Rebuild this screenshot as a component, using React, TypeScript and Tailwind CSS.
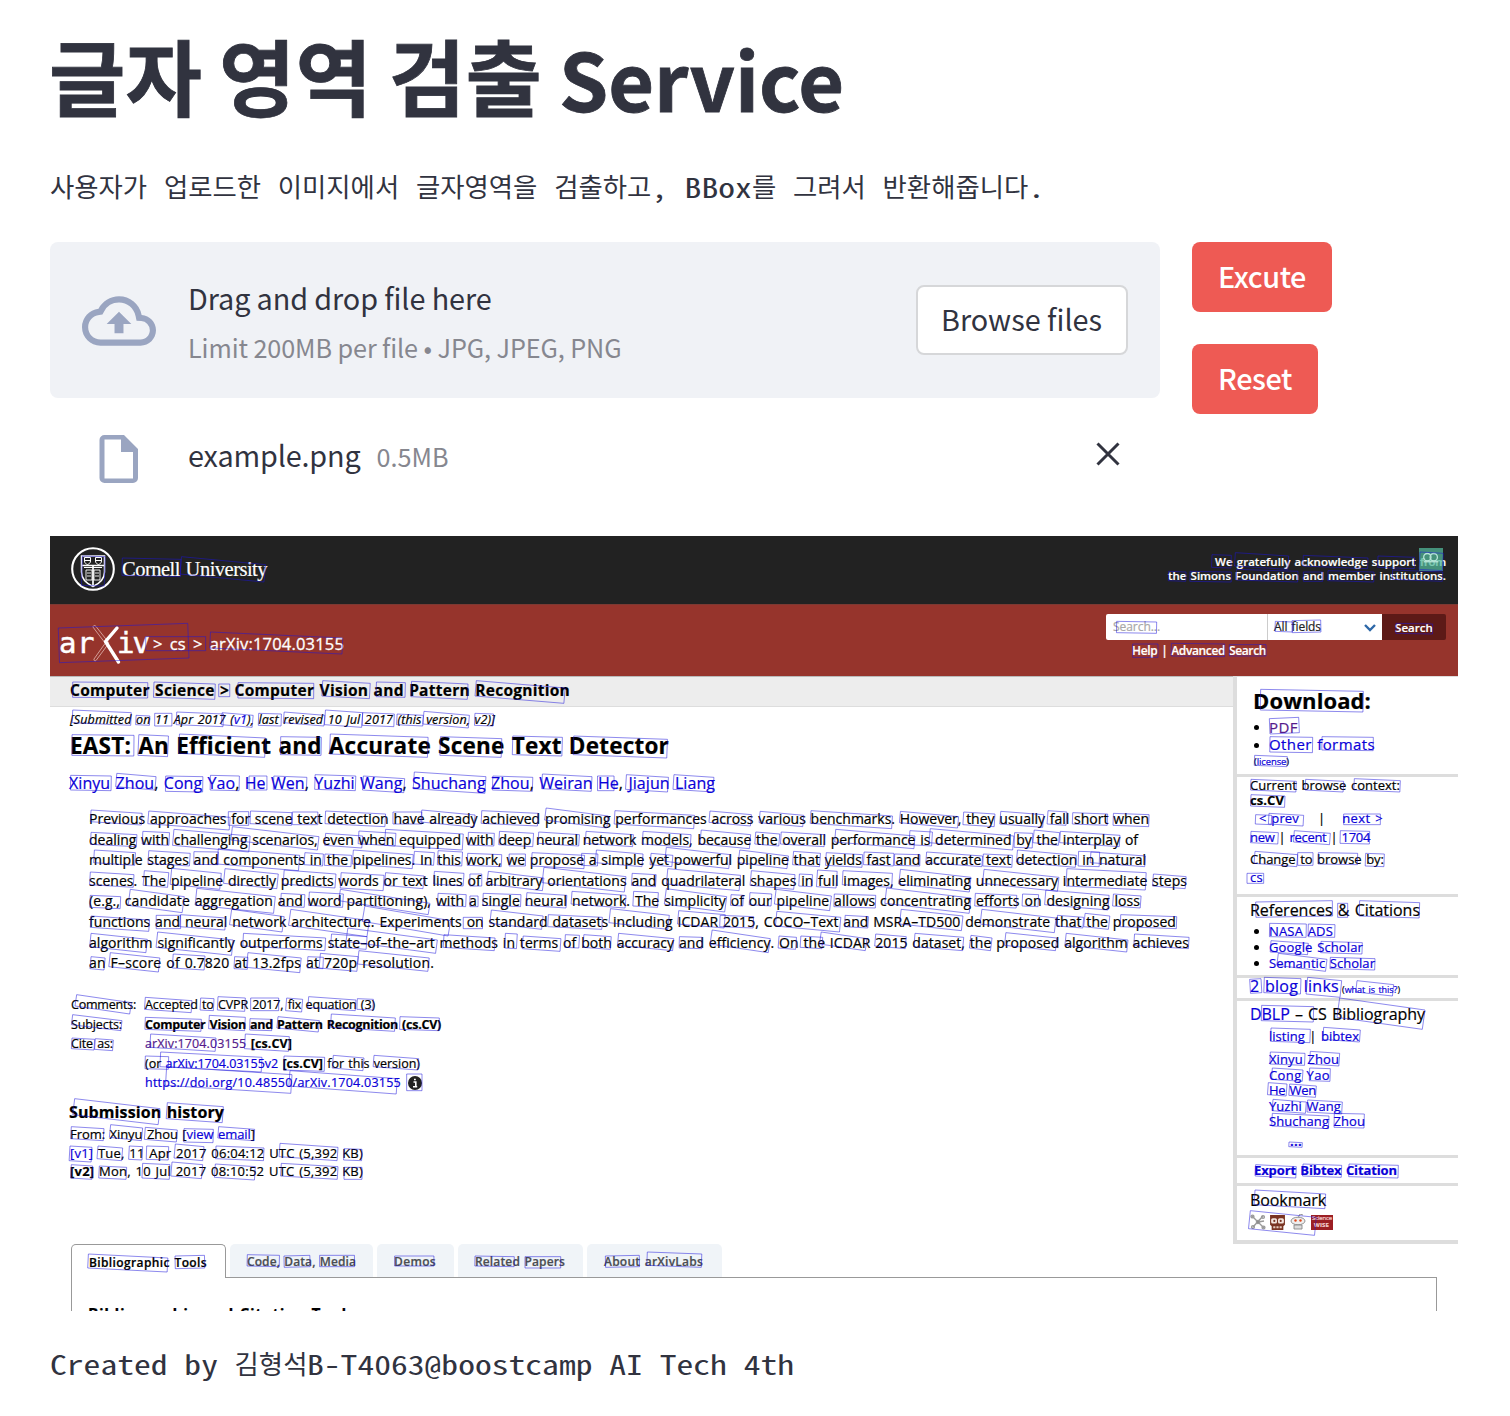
import { useLayoutEffect, useRef, type ReactNode } from "react";

/* A single line of text whose tracking is adjusted so that it fills a given width. */
function Line({ w, className = "", children }: { w: number; className?: string; children: ReactNode }) {
  const ref = useRef<HTMLSpanElement>(null);
  useLayoutEffect(() => {
    const el = ref.current;
    if (!el) return;
    const fit = () => {
      el.style.letterSpacing = "0px";
      const n = (el.textContent || "").length;
      el.style.letterSpacing = `${(w - el.getBoundingClientRect().width) / n}px`;
    };
    fit();
    document.fonts.ready.then(fit);
  }, [w]);
  return (
    <span ref={ref} className={`inline-block shrink-0 self-start justify-self-start whitespace-pre ${className}`}>
      {children}
    </span>
  );
}

const LATIN = "inline-block origin-left scale-x-[1.260] font-['Noto_Sans_Mono_CJK_KR','Liberation_Mono',monospace] text-[26.667px] font-normal";
const HANGUL = "relative -top-[1px] font-['Noto_Sans_CJK_KR',sans-serif] text-[26.400px]";

/* Monospaced text with Hangul runs set in the proportional Korean face. */
function Mono({ text }: { text: string }) {
  return (
    <>
      {text.split(/([가-힣]+)/).map((part, i) =>
        i % 2 ? (
          <span key={i} className={HANGUL}>{part}</span>
        ) : (
          <span key={i} className={LATIN} style={{ width: part.length * 13.333, marginRight: part.length * 3.45 }}>{part}</span>
        ),
      )}
    </>
  );
}

/* Detected word boxes: top-left x, y, top-right x, y, height. */
type Box = [number, number, number, number, number];
type Region = { x: number; y: number; sx: number; boxes: Box[] };

const regions: Region[] = [
  {
    x: 50, y: 530, sx: 2.904,
    boxes: [
      [94, 78, 160, 80, 88], [210, 84, 380, 88, 52], [382, 80, 626, 104, 52], [24, 294, 400, 280, 104],
      [278, 320, 452, 320, 42], [466, 306, 850, 324, 48],
      [66, 456, 284, 458, 46], [302, 456, 480, 462, 46], [490, 462, 522, 462, 38], [546, 458, 766, 460, 46],
      [792, 452, 930, 460, 46], [948, 456, 1032, 458, 44], [1050, 454, 1214, 462, 46], [1238, 452, 1496, 474, 46],
      [66, 540, 236, 548, 38], [250, 556, 290, 558, 28], [304, 550, 354, 550, 38], [368, 546, 504, 552, 38],
      [500, 548, 590, 556, 36], [606, 550, 672, 552, 36], [680, 546, 798, 556, 32], [800, 540, 908, 548, 44],
      [908, 548, 1000, 552, 38], [1008, 552, 1084, 556, 32], [1086, 544, 1218, 556, 38], [1234, 550, 1288, 552, 36],
      [64, 614, 244, 616, 62], [258, 614, 344, 618, 62], [376, 612, 626, 624, 58], [670, 620, 788, 622, 54],
      [814, 612, 1098, 622, 60], [1134, 620, 1312, 626, 56], [1344, 618, 1488, 622, 56], [1521, 618, 1793, 628, 56],
      [60, 736, 178, 738, 44], [194, 730, 308, 740, 40], [336, 738, 444, 740, 46], [466, 736, 550, 738, 44],
      [578, 738, 630, 738, 42], [650, 738, 746, 742, 40], [770, 734, 888, 738, 44], [910, 738, 1030, 746, 42],
      [1058, 726, 1266, 740, 50], [1286, 738, 1402, 742, 42], [1430, 732, 1574, 740, 44], [1590, 738, 1638, 738, 44],
      [1674, 734, 1796, 742, 44], [1812, 734, 1928, 742, 44],
    ],
  },
  {
    x: 60, y: 800, sx: 2.703,
    boxes: [
      [84, 30, 222, 40, 35], [240, 33, 460, 52, 38], [455, 35, 510, 35, 41], [515, 33, 627, 38, 38],
      [628, 36, 697, 36, 38], [718, 33, 880, 42, 38], [900, 36, 978, 36, 36], [978, 30, 1122, 45, 36],
      [1140, 32, 1292, 40, 38], [1314, 24, 1482, 48, 36], [1500, 32, 1715, 46, 40],
      [84, 97, 208, 104, 36], [224, 94, 296, 98, 38], [308, 88, 514, 108, 48], [466, 80, 700, 110, 40],
      [718, 100, 818, 108, 36], [808, 93, 908, 100, 38], [880, 88, 1090, 102, 48], [1104, 97, 1174, 100, 38],
      [1188, 94, 1280, 100, 40], [1294, 96, 1404, 104, 34], [1422, 94, 1550, 104, 36],
      [93, 150, 204, 158, 38], [240, 152, 352, 160, 38], [362, 155, 428, 156, 38], [428, 146, 648, 166, 46],
      [662, 158, 712, 162, 36], [716, 162, 788, 166, 34], [793, 150, 955, 164, 42], [958, 154, 1012, 158, 38],
      [1022, 152, 1088, 156, 42], [1102, 160, 1194, 164, 36], [1214, 162, 1258, 162, 36], [1276, 158, 1418, 166, 40],
      [1410, 160, 1454, 162, 36], [1450, 150, 1576, 162, 38],
      [82, 216, 200, 224, 38], [228, 212, 294, 218, 44], [302, 205, 436, 220, 48], [446, 206, 590, 222, 44],
      [606, 210, 746, 222, 42], [760, 218, 876, 226, 46], [880, 218, 984, 228, 38], [1012, 214, 1092, 220, 38],
      [1108, 222, 1140, 222, 36], [1158, 214, 1308, 234, 38], [1308, 202, 1530, 230, 46],
      [82, 286, 164, 290, 36], [190, 268, 336, 290, 48], [370, 265, 582, 290, 50], [598, 280, 662, 284, 38],
      [674, 276, 766, 282, 40], [758, 268, 1000, 310, 34], [1022, 280, 1098, 284, 36], [1108, 288, 1130, 288, 32],
      [1144, 280, 1246, 284, 36], [1262, 278, 1370, 286, 38], [1384, 274, 1530, 286, 38],
      [84, 348, 242, 360, 34], [260, 346, 326, 346, 40], [326, 344, 448, 354, 36], [464, 328, 606, 350, 46],
      [624, 328, 836, 362, 48], [824, 318, 1056, 362, 46], [1090, 352, 1142, 352, 34], [1166, 330, 1306, 348, 40],
      [1320, 344, 1466, 352, 36], [1488, 326, 1647, 346, 42],
      [84, 400, 236, 418, 40], [264, 396, 468, 420, 46], [496, 400, 718, 414, 38], [734, 402, 830, 410, 38],
      [778, 384, 1020, 420, 40], [1038, 404, 1176, 414, 38], [1204, 400, 1236, 402, 44], [1252, 408, 1354, 416, 38],
      [1366, 404, 1404, 406, 38], [1416, 404, 1490, 410, 38], [1510, 400, 1659, 416, 36],
      [84, 470, 122, 474, 36], [136, 458, 270, 474, 42], [306, 462, 392, 468, 42], [472, 470, 508, 472, 36],
      [508, 458, 652, 474, 44], [670, 470, 712, 472, 34], [704, 460, 806, 470, 44], [808, 452, 998, 474, 40],
    ],
  },
  {
    x: 630, y: 800, sx: 2.751,
    boxes: [
      [220, 33, 334, 44, 34], [358, 34, 478, 46, 34], [498, 32, 722, 48, 38], [744, 34, 904, 50, 34],
      [918, 36, 1004, 42, 38], [1020, 34, 1138, 44, 38], [1150, 32, 1202, 36, 40], [1218, 38, 1314, 42, 34],
      [1330, 40, 1428, 44, 36],
      [36, 94, 168, 104, 38], [196, 90, 332, 104, 42], [346, 96, 412, 102, 36], [416, 96, 536, 104, 36],
      [566, 88, 784, 108, 38], [770, 92, 832, 96, 42], [826, 86, 1056, 108, 42], [1058, 98, 1108, 100, 44],
      [1112, 90, 1182, 98, 38], [1184, 94, 1348, 106, 34],
      [58, 160, 118, 166, 34], [100, 142, 276, 164, 42], [302, 150, 436, 168, 38], [450, 154, 524, 160, 40],
      [540, 158, 640, 164, 38], [644, 156, 726, 160, 38], [728, 162, 798, 164, 34], [816, 156, 970, 168, 32],
      [972, 162, 1052, 166, 36], [1066, 150, 1228, 166, 36], [1234, 154, 1292, 156, 44], [1268, 156, 1418, 168, 32],
      [6, 220, 72, 224, 36], [104, 206, 304, 226, 46], [334, 212, 454, 224, 44], [466, 222, 502, 224, 36],
      [516, 210, 570, 214, 50], [586, 212, 722, 220, 42], [744, 208, 938, 232, 44], [974, 208, 1180, 232, 42],
      [1202, 206, 1420, 218, 52], [1440, 222, 1530, 230, 36],
      [10, 274, 78, 278, 44], [100, 266, 266, 290, 46], [278, 284, 312, 286, 32], [330, 278, 390, 282, 36],
      [402, 268, 554, 288, 44], [562, 282, 676, 286, 38], [706, 264, 938, 294, 46], [950, 280, 1064, 286, 38],
      [1080, 282, 1124, 284, 36], [1144, 270, 1318, 286, 44], [1330, 282, 1406, 288, 36],
      [134, 332, 262, 344, 40], [248, 346, 340, 350, 34], [404, 334, 580, 352, 44], [592, 346, 656, 350, 34],
      [746, 328, 916, 348, 44], [968, 328, 1172, 354, 44], [1176, 346, 1248, 352, 32], [1252, 340, 1320, 348, 40],
      [1350, 344, 1504, 350, 36],
      [136, 410, 198, 412, 34], [226, 390, 386, 416, 42], [410, 408, 458, 412, 36], [470, 408, 530, 412, 34],
      [526, 396, 652, 416, 36], [676, 402, 760, 410, 36], [784, 400, 918, 412, 40], [938, 406, 996, 414, 38],
      [1034, 398, 1174, 414, 38], [1200, 400, 1370, 420, 36], [1388, 402, 1538, 412, 34],
    ],
  },
  {
    x: 1090, y: 530, sx: 3,
    boxes: [
      [366, 74, 424, 76, 38], [436, 68, 596, 78, 40], [640, 76, 834, 84, 32], [864, 78, 974, 82, 34],
      [990, 66, 1060, 70, 52], [236, 124, 288, 126, 28], [300, 124, 424, 126, 30], [440, 118, 624, 124, 32],
      [640, 126, 698, 126, 28], [714, 122, 852, 126, 30], [908, 120, 1058, 126, 28],
      [80, 274, 200, 276, 34], [556, 274, 608, 276, 30], [606, 272, 692, 270, 36], [918, 280, 1028, 282, 30],
      [128, 342, 204, 342, 40], [244, 340, 404, 342, 38], [418, 344, 528, 344, 34],
      [512, 478, 820, 484, 62], [538, 566, 626, 562, 46], [540, 620, 668, 622, 46], [696, 620, 850, 622, 40],
      [494, 676, 592, 680, 30],
    ],
  },
  {
    x: 1225, y: 770, sx: 3,
    boxes: [
      [78, 28, 214, 34, 32], [242, 28, 356, 34, 32], [388, 26, 526, 32, 34], [78, 74, 180, 78, 34],
      [92, 134, 140, 136, 28], [132, 130, 236, 136, 32], [356, 132, 466, 132, 32], [78, 184, 160, 188, 34],
      [208, 182, 316, 190, 34], [346, 182, 434, 184, 38], [90, 244, 218, 254, 36], [218, 248, 264, 248, 38],
      [280, 248, 398, 250, 34], [422, 250, 478, 252, 38], [66, 310, 116, 310, 30], [92, 396, 322, 392, 46],
      [338, 400, 368, 400, 42], [404, 392, 584, 398, 46], [134, 460, 244, 462, 40], [250, 462, 330, 464, 38],
      [138, 512, 250, 520, 34], [288, 514, 412, 518, 34], [160, 550, 306, 568, 36], [316, 562, 450, 566, 34],
      [74, 628, 108, 626, 42], [118, 622, 228, 626, 46], [248, 622, 350, 632, 50], [396, 632, 506, 644, 34],
    ],
  },
  {
    x: 1225, y: 1000, sx: 3,
    boxes: [
      [110, 16, 266, 20, 46], [344, -6, 600, 30, 58], [138, 84, 256, 88, 40], [296, 82, 406, 90, 36],
      [136, 156, 240, 160, 36], [256, 154, 344, 160, 38], [142, 204, 234, 210, 34], [254, 204, 316, 206, 38],
      [130, 248, 186, 252, 36], [194, 252, 274, 258, 34], [144, 298, 244, 306, 34], [248, 300, 352, 306, 36],
      [142, 340, 312, 348, 38], [328, 340, 418, 342, 42], [192, 426, 232, 428, 14], [92, 494, 214, 500, 34],
      [234, 492, 350, 496, 36], [372, 492, 520, 496, 38], [90, 570, 302, 582, 44], [76, 632, 274, 652, 54],
    ],
  },
  {
    x: 60, y: 980, sx: 3,
    boxes: [
      [50, 44, 214, 68, 34], [256, 52, 396, 62, 36], [422, 54, 462, 56, 36], [474, 50, 556, 54, 40],
      [572, 54, 656, 54, 38], [680, 54, 728, 58, 38], [746, 50, 888, 60, 32], [892, 56, 940, 58, 32],
      [38, 104, 186, 122, 30], [256, 112, 424, 118, 36], [448, 106, 556, 112, 40], [570, 116, 636, 118, 34],
      [654, 110, 778, 122, 34], [814, 102, 1006, 114, 40], [1020, 110, 1138, 114, 38],
      [36, 174, 104, 178, 32], [106, 176, 160, 180, 32], [272, 162, 468, 174, 40], [556, 162, 688, 170, 44],
      [256, 228, 326, 230, 38], [302, 216, 606, 232, 44], [672, 228, 794, 232, 42], [820, 226, 912, 234, 38],
      [942, 226, 1076, 236, 34], [320, 260, 696, 284, 56], [690, 272, 1012, 296, 46], [1040, 282, 1086, 282, 50],
      [44, 356, 300, 386, 48], [322, 368, 490, 380, 48],
      [34, 440, 132, 446, 36], [152, 434, 248, 444, 38], [256, 442, 352, 450, 36], [372, 446, 460, 448, 40],
      [476, 440, 584, 448, 34],
      [30, 498, 96, 502, 44], [114, 498, 188, 504, 38], [208, 498, 248, 500, 40], [260, 498, 326, 500, 40],
      [346, 492, 432, 500, 42], [468, 498, 612, 504, 38], [660, 490, 834, 502, 40], [852, 506, 906, 508, 34],
      [34, 554, 98, 558, 40], [118, 558, 200, 562, 36], [248, 550, 330, 554, 44], [336, 546, 428, 554, 42],
      [466, 552, 586, 560, 40], [664, 550, 834, 560, 38], [852, 562, 906, 562, 36],
    ],
  },
  {
    x: 50, y: 1230, sx: 2.24,
    boxes: [
      [86, 72, 264, 84, 42], [280, 78, 346, 76, 38], [442, 74, 514, 76, 34], [524, 78, 582, 76, 34],
      [604, 76, 682, 76, 34], [772, 78, 860, 78, 30], [952, 78, 1040, 80, 30], [1064, 80, 1144, 80, 34],
      [1244, 78, 1320, 76, 34], [1338, 66, 1460, 72, 40],
    ],
  },
];

function WordBoxes() {
  return (
    <svg viewBox="50 536 1408 775" className="pointer-events-none absolute inset-0 z-20 h-[775px] w-[1408px]" fill="none" stroke="#1c14dc" strokeOpacity="0.5" strokeWidth="1">
      {regions.map((r, i) =>
        r.boxes.map(([x0, y0, x1, y1, h], j) => {
          const ax = r.x + x0 / r.sx, ay = r.y + y0 / 3;
          const bx = r.x + x1 / r.sx, by = r.y + y1 / 3;
          const hh = h / 3;
          const dx = (-(by - ay) / (bx - ax)) * hh;
          return <polygon key={`${i}-${j}`} points={`${ax},${ay} ${bx},${by} ${bx + dx},${by + hh} ${ax + dx},${ay + hh}`} />;
        }),
      )}
    </svg>
  );
}

function CornellSeal() {
  return (
    <svg viewBox="0 0 44 44" className="relative -top-px h-[44px] w-[44px]" fill="none" stroke="#fff">
      <circle cx="22" cy="22" r="20.8" strokeWidth="2.100" />
      <path d="M10.500 9h23v16c0 7-5 11.500-11.500 14.500C15.500 36.500 10.500 32 10.500 25z" strokeWidth="1.500" />
      <path d="M10.500 18.500h23M22 18.500v21" strokeWidth="1.700" />
      <path d="M13.500 10.500h6v3.500c0 2-1.500 3-3 3.500-1.500-.5-3-1.500-3-3.500zM24.500 10.500h6v3.500c0 2-1.500 3-3 3.500-1.500-.5-3-1.500-3-3.500zM14 13.500h5M25 13.500h5M13 20.500h18" strokeWidth="1" />
      <path d="M15 23h6v10h-6zM23 23h6v10h-6zM16 26h4M16 29h4M24 26h4M24 29h4" strokeWidth="0.9" />
    </svg>
  );
}

function ArxivLogo() {
  return (
    <div className="flex h-[44px] items-center font-['DejaVu_Sans_Mono',monospace] text-[29px] leading-[42px] text-white [-webkit-text-stroke:0.5px_white]">
      <Line w={36}>ar</Line>
      <svg viewBox="0 0 30 42" className="-mx-[4px] h-[42px] w-[30px] shrink-0" fill="none" strokeLinecap="round">
        <path d="M2 3.500c.8-1.500 2-1.300 3 0L18 20 5 37.500c-1 1-2.500 0-2-1.500L14 20.500z" stroke="#d9a9a4" strokeWidth="0.9" />
        <path d="M26 5 14.500 18.500 27.500 39" stroke="#fff" strokeWidth="3.400" strokeLinejoin="round" />
      </svg>
      <Line w={31}>iv</Line>
    </div>
  );
}

const abstract: [number, string][] = [
  [1060, "Previous approaches for scene text detection have already achieved promising performances across various benchmarks. However, they usually fall short when"],
  [1049, "dealing with challenging scenarios, even when equipped with deep neural network models, because the overall performance is determined by the interplay of"],
  [1057, "multiple stages and components in the pipelines. In this work, we propose a simple yet powerful pipeline that yields fast and accurate text detection in natural"],
  [1098, "scenes. The pipeline directly predicts words or text lines of arbitrary orientations and quadrilateral shapes in full images, eliminating unnecessary intermediate steps"],
  [1051, "(e.g., candidate aggregation and word partitioning), with a single neural network. The simplicity of our pipeline allows concentrating efforts on designing loss"],
  [1087, "functions and neural network architecture. Experiments on standard datasets including ICDAR 2015, COCO–Text and MSRA–TD500 demonstrate that the proposed"],
  [1100, "algorithm significantly outperforms state–of–the–art methods in terms of both accuracy and efficiency. On the ICDAR 2015 dataset, the proposed algorithm achieves"],
  [345, "an F–score of 0.7820 at 13.2fps at 720p resolution."],
];

const authors: [number, string][] = [
  [70, "Xinyu Zhou"], [61, "Cong Yao"], [47, "He Wen"], [72, "Yuzhi Wang"], [96, "Shuchang Zhou"],
];

const Blue = ({ children }: { children: ReactNode }) => <span className="text-[#0a00d8]">{children}</span>;

function Bullet({ w, children, className }: { w: number; children: ReactNode; className: string }) {
  return (
    <div className={`flex ${className}`}>
      <span className="mr-[10px] ml-[4px] h-[5px] w-[5px] self-center rounded-full bg-black" />
      <Line w={w}>{children}</Line>
    </div>
  );
}

function Sidebar() {
  return (
    <aside className="h-[568px] w-[225px] shrink-0 border-t border-b-4 border-l-[4px] border-[#ddd] text-[13px] text-black">
      <section className="h-[100px] border-b-[3px] border-[#ddd] pt-[6px] pl-[13px]">
        <div className="flex h-[36px] text-[22px] leading-[34px] font-bold"><Line w={118} className="ml-[3px]">Download:</Line></div>
        <Bullet w={29} className="h-[17px] text-[15px] leading-[16px] text-[#551a8b]">PDF</Bullet>
        <Bullet w={106} className="h-[18px] text-[15px] leading-[17px] text-[#0a00d8]">Other formats</Bullet>
        <div className="flex h-[16px] text-[9.500px] leading-[15px]"><Line w={35} className="ml-[4px]">(<Blue>license</Blue>)</Line></div>
      </section>
      <section className="h-[120px] border-b-[3px] border-[#ddd] pl-[13px]">
        <div className="flex h-[16px] leading-[16px]"><Line w={150}>Current browse context:</Line></div>
        <div className="flex h-[16px] leading-[15px] font-bold"><Line w={34}>cs.CV</Line></div>
        <div className="flex h-[20px] leading-[19px]">
          <Line w={40} className="ml-[9px] text-[#0a00d8]">&lt; prev</Line>
          <span className="ml-[19px]">|</span>
          <Line w={41} className="ml-[17px] text-[#0a00d8]">next &gt;</Line>
        </div>
        <div className="flex h-[18px] leading-[17px]"><Line w={120}><Blue>new</Blue> | <Blue>recent</Blue> | <Blue>1704</Blue></Line></div>
        <div className="flex h-[26px] leading-[25px]"><Line w={134}>Change to browse by:</Line></div>
        <div className="flex h-[10px] leading-[9px]"><Line w={13}><Blue>cs</Blue></Line></div>
      </section>
      <section className="h-[81px] border-b-[3px] border-[#ddd] pl-[13px]">
        <div className="flex h-[26px] text-[16px] leading-[26px]"><Line w={170}>References &amp; Citations</Line></div>
        <Bullet w={64} className="h-[16px] leading-[16px] text-[#0a00d8]">NASA ADS</Bullet>
        <Bullet w={94} className="h-[16px] leading-[16px] text-[#0a00d8]">Google Scholar</Bullet>
        <Bullet w={106} className="h-[16px] leading-[16px] text-[#0a00d8]">Semantic Scholar</Bullet>
      </section>
      <section className="flex h-[23px] border-b-[3px] border-[#ddd] pl-[13px] leading-[17px]">
        <Line w={89} className="text-[16px] text-[#0a00d8]">2 blog links</Line>
        <Line w={58} className="ml-[3px] pt-[3px] text-[9px]">(<Blue>what is this?</Blue>)</Line>
      </section>
      <section className="h-[157px] border-b-[3px] border-[#ddd] pl-[13px]">
        <div className="flex h-[29px] text-[16px] leading-[27px]"><Line w={175}><Blue>DBLP</Blue> – CS Bibliography</Line></div>
        <div className="ml-[19px] flex h-[22px] leading-[12px]"><Line w={90}><Blue>listing</Blue> | <Blue>bibtex</Blue></Line></div>
        {authors.map(([w, name]) => (
          <div key={name} className="ml-[19px] flex h-[15.600px] leading-[14px] text-[#0a00d8]"><Line w={w}>{name}</Line></div>
        ))}
        <div className="ml-[40px] flex h-[20px] leading-[22px]"><Line w={12} className="font-bold text-[#0a00d8]">...</Line></div>
      </section>
      <section className="flex h-[28px] border-b-[3px] border-[#ddd] pl-[17px] leading-[24px] font-bold text-[#0a00d8]">
        <Line w={143}>Export Bibtex Citation</Line>
      </section>
      <section className="pl-[13px]">
        <div className="flex h-[28px] text-[16px] leading-[28px]"><Line w={76}>Bookmark</Line></div>
        <div className="flex h-[16px] items-center">
          <svg viewBox="0 0 16 16" className="mr-[3px] h-[16px] w-[16px]" fill="none" stroke="#999" strokeWidth="1.400">
            <path d="M2 2l12 12M13 2 3 13M8 8l6-1" />
            <circle cx="2.500" cy="2.500" r="1.400" /><circle cx="13" cy="3" r="1.400" /><circle cx="8" cy="8" r="1.600" fill="#888" /><circle cx="13.500" cy="13.500" r="1.400" /><circle cx="3" cy="13" r="1.400" />
          </svg>
          <svg viewBox="0 0 16 16" className="mr-[4px] h-[17px] w-[17px]">
            <path d="M1 1h14v9l-1.500 1.500V15h-11v-3.500L1 10z" fill="#7a3423" />
            <rect x="2" y="4" width="5.500" height="5" rx="1.500" fill="#f3e5de" /><rect x="8.500" y="4" width="5.500" height="5" rx="1.500" fill="#f3e5de" />
            <circle cx="5" cy="6.500" r="1" fill="#7a3423" /><circle cx="11" cy="6.500" r="1" fill="#7a3423" />
            <path d="M4 12.500h2M7 12.500h2M10 12.500h2" stroke="#e5c9bd" strokeWidth="2" />
          </svg>
          <svg viewBox="0 0 16 16" className="mr-[5px] h-[16px] w-[16px]" stroke="#888" strokeWidth="0.900">
            <path d="M8 4 10 0l3 1" fill="none" />
            <ellipse cx="8" cy="7" rx="7" ry="3.800" fill="#eee" />
            <path d="M4 11h8v4H4z" fill="#ddd" />
            <circle cx="5.500" cy="6.500" r="1.200" fill="#e2491c" stroke="none" /><circle cx="10.500" cy="6.500" r="1.200" fill="#e2491c" stroke="none" />
          </svg>
          <div className="flex h-[15px] w-[22px] flex-col bg-[#9c1f24] pl-px text-[6px] leading-[7px] text-[#f1cfcf]">
            <Line w={20}>Science</Line>
            <Line w={15} className="ml-[2px] font-bold">WISE</Line>
          </div>
        </div>
      </section>
    </aside>
  );
}

const tabs: [string, number, string][] = [
  ["Code, Data, Media", 109, "w-[143px] pl-[17px] mr-[4px]"],
  ["Demos", 42, "w-[77px] pl-[17px] mr-[4px]"],
  ["Related Papers", 90, "w-[125px] pl-[17px] mr-[4px]"],
  ["About arXivLabs", 99, "w-[135px] pl-[17px]"],
];

function ArxivPage() {
  return (
    <div className="relative mt-[34px] h-[775px] w-[1408px] overflow-hidden bg-white font-['Open_Sans','Noto_Sans',sans-serif] text-black [word-spacing:0.07em] [-webkit-text-stroke-width:0.2px]">
      <header className="flex h-[68px] items-center bg-[#222] pr-[12px] pl-[21px] text-white">
        <CornellSeal />
        <div className="mt-[-2px] ml-[7px] font-['Liberation_Serif',serif] text-[20.500px] leading-[28px]"><Line w={145}>Cornell University</Line></div>
        <div className="relative -top-px ml-auto flex flex-col text-[11.500px] leading-[14.500px] font-semibold">
          <div className="flex self-end">
            <Line w={205}>We gratefully acknowledge support </Line>
            <span className="relative flex">
              <Line w={26}>from</Line>
              <span className="absolute -top-[7px] -left-px flex h-[23px] w-[24px] items-center justify-center bg-[#52b79a]/75">
                <svg viewBox="0 0 24 24" className="h-[22px] w-[22px]" fill="none" stroke="#b9e6d9" strokeWidth="1.400">
                  <circle cx="8" cy="10" r="4" /><circle cx="15" cy="10" r="4" /><path d="M4 15h16" />
                </svg>
              </span>
            </span>
          </div>
          <Line w={278}>the Simons Foundation and member institutions.</Line>
        </div>
      </header>
      <div className="flex h-[72px] border-t border-[#7c3a33] bg-[#96342c] pl-[9px] text-white">
        <div className="mt-[17px]"><ArxivLogo /></div>
        <Line w={191} className="mt-[26px] ml-[5px] text-[16.500px] leading-[26px] [word-spacing:0.16em] [-webkit-text-stroke-width:0.3px]">&gt; cs &gt; arXiv:1704.03155</Line>
        <div className="mt-[9px] mr-[12px] ml-auto w-[340px]">
          <div className="flex h-[26px] text-[12px] leading-[26px]">
            <div className="w-[161px] rounded-l-[2px] bg-white pl-[7px] text-[#a8a8a8]"><Line w={47}>Search...</Line></div>
            <div className="flex w-[115px] border-l border-[#ccc] bg-white pl-[6px] text-[#222]">
              <Line w={47}>All fields</Line>
              <svg viewBox="0 0 12 8" className="mt-[10px] ml-auto mr-[6px] h-[8px] w-[12px]" fill="none" stroke="#2d68a8" strokeWidth="2.400"><path d="M1 1l5 5 5-5" /></svg>
            </div>
            <div className="flex w-[64px] rounded-r-[2px] bg-[#5d1a17] pl-[13px] text-[11.500px] leading-[28px] font-semibold"><Line w={38}>Search</Line></div>
          </div>
          <div className="ml-[26px] flex text-[12px] leading-[21px] font-semibold"><Line w={134}>Help | Advanced Search</Line></div>
        </div>
      </div>
      <div className="flex h-[569px]">
        <div className="min-w-0 flex-1">
          <div className="flex h-[31px] border-t border-b border-t-[#b9b9b9] border-b-[#ddd] bg-[#ededed] pl-[20px] text-[15.500px] leading-[27px] font-bold">
            <Line w={500}>Computer Science &gt; Computer Vision and Pattern Recognition</Line>
          </div>
          <div className="flex h-[25px] pl-[20px] text-[12.500px] leading-[26px] italic">
            <Line w={425}>[Submitted on 11 Apr 2017 (<Blue>v1</Blue>), last revised 10 Jul 2017 (this version, v2)]</Line>
          </div>
          <div className="flex h-[30px] pl-[20px] text-[22.500px] leading-[27px] font-bold"><Line w={599}>EAST: An Efficient and Accurate Scene Text Detector</Line></div>
          <div className="flex h-[46px] pl-[19px] text-[16px] leading-[43px]">
            <Line w={646}>
              <Blue>Xinyu Zhou</Blue>, <Blue>Cong Yao</Blue>, <Blue>He Wen</Blue>, <Blue>Yuzhi Wang</Blue>, <Blue>Shuchang Zhou</Blue>, <Blue>Weiran He</Blue>, <Blue>Jiajun Liang</Blue>
            </Line>
          </div>
          <div className="flex h-[186px] flex-col pt-px pl-[39px] text-[14px] leading-[20.600px]">
            {abstract.map(([w, t]) => <Line key={w} w={w}>{t}</Line>)}
          </div>
          <div className="grid grid-cols-[74px_1fr] pt-px pl-[21px] text-[12.500px] leading-[19.600px]">
            <Line w={65}>Comments:</Line><Line w={230}>Accepted to CVPR 2017, fix equation (3)</Line>
            <Line w={51}>Subjects:</Line><Line w={296} className="font-bold">Computer Vision and Pattern Recognition (cs.CV)</Line>
            <Line w={42}>Cite as:</Line><Line w={147}><span className="text-[#551a8b]">arXiv:1704.03155</span> <b>[cs.CV]</b></Line>
            <span /><Line w={275}>(or <Blue>arXiv:1704.03155v2</Blue> <b>[cs.CV]</b> for this version)</Line>
            <span />
            <div className="flex items-center">
              <Line w={256}><Blue>https://doi.org/10.48550/arXiv.1704.03155</Blue></Line>
              <svg viewBox="0 0 14 14" className="ml-[7px] h-[14px] w-[14px]"><circle cx="7" cy="7" r="7" fill="#222" /><path d="M5.500 6h2.300v4.500M5 10.700h4.200M6 3.500h1.800" stroke="#fff" strokeWidth="1.600" fill="none" /></svg>
            </div>
          </div>
          <div className="flex h-[32px] pl-[19px] text-[16px] leading-[38px] font-bold"><Line w={155}>Submission history</Line></div>
          <div className="flex flex-col pl-[20px] text-[13px] leading-[18.700px]">
            <Line w={185}>From: Xinyu Zhou [<Blue>view email</Blue>]</Line>
            <Line w={293}><Blue>[v1]</Blue> Tue, 11 Apr 2017 06:04:12 UTC (5,392 KB)</Line>
            <Line w={293}><b>[v2]</b> Mon, 10 Jul 2017 08:10:52 UTC (5,392 KB)</Line>
          </div>
        </div>
        <Sidebar />
      </div>
      <div className="-mt-px pl-[21px] text-[12px] font-semibold">
        <div className="relative z-10 flex h-[33px] leading-[35px] text-[#4a4d52]">
          <div className="mr-[4px] h-[34px] w-[155px] rounded-t-[5px] border border-b-0 border-[#999] bg-white pl-[17px] text-black"><Line w={118}>Bibliographic Tools</Line></div>
          {tabs.map(([t, w, c]) => (
            <div key={t} className={`h-[33px] rounded-t-[5px] bg-[#f0f4f8] ${c}`}><Line w={w}>{t}</Line></div>
          ))}
        </div>
        <div className="h-[40px] w-[1366px] border border-[#999] pt-[25px] pl-[16px] text-[15.500px] leading-[22px] font-bold"><Line w={267}>Bibliographic and Citation Tools</Line></div>
      </div>
      <WordBoxes />
    </div>
  );
}

export default function App() {
  return (
    <main className="h-[1416px] w-[1510px] overflow-hidden bg-white pl-[50px] font-['Noto_Sans_CJK_KR',sans-serif] text-[#31333f]">
      <h1 className="flex h-[160px] items-baseline pt-[14px] leading-[128px] font-bold [-webkit-text-stroke:0.8px_#31333f]">
        <Line w={510} className="relative -top-[4px] -left-px text-[83px] [word-spacing:-2px]">글자 영역 검출 </Line>
        <Line w={285} className="relative -left-px text-[79px]">Service</Line>
      </h1>
      <p className="-mt-px flex h-[57px] items-baseline leading-[56px] whitespace-pre"><Mono text="사용자가 업로드한 이미지에서 글자영역을 검출하고, BBox를 그려서 반환해줍니다." /></p>
      <div className="mt-[26px] flex">
        <div className="w-[1110px]">
          <div className="flex h-[156px] items-center rounded-[8px] bg-[#f0f2f6] px-[32px]">
            <svg viewBox="0 0 24 24" className="mt-px h-[74px] w-[74px]" fill="#9aa5c1">
              <path d="M19.350 10.040A7.490 7.490 0 0 0 12 4C9.110 4 6.600 5.640 5.350 8.040A5.994 5.994 0 0 0 0 14c0 3.310 2.690 6 6 6h13c2.760 0 5-2.240 5-5 0-2.640-2.050-4.780-4.650-4.960zM19 18H6c-2.210 0-4-1.790-4-4 0-2.050 1.530-3.760 3.560-3.970l1.070-.11.5-.95A5.469 5.469 0 0 1 12 6c2.620 0 4.880 1.860 5.390 4.430l.3 1.500 1.530.11A2.980 2.980 0 0 1 22 15c0 1.650-1.350 3-3 3zM8 13h2.550v3h2.900v-3H16l-4-4-4 4z" />
            </svg>
            <div className="flex flex-col pt-[6px] pl-[32px]">
              <Line w={303.5} className="text-[28.800px] leading-[48px]">Drag and drop file here</Line>
              <Line w={433.5} className="text-[25.200px] leading-[50px] text-[#86878f]">Limit 200MB per file • JPG, JPEG, PNG</Line>
            </div>
            <div className="ml-auto flex h-[70px] w-[212px] rounded-[8px] border-2 border-[#d6d7d9] bg-white pl-[23px] text-[28.800px] leading-[63px]"><Line w={161}>Browse files</Line></div>
          </div>
          <div className="flex h-[104px] pl-[49px]">
            <svg viewBox="0 0 40 50" className="mt-[36px] h-[50px] w-[40px]" fill="#9aa5c1">
              <path fillRule="evenodd" d="M6 1h19l14 14v29a5 5 0 0 1-5 5H5.500a5 5 0 0 1-5-5V6a5 5 0 0 1 5-5zM5.500 5.500v39H34V18H22V5.500z" />
            </svg>
            <Line w={172.5} className="ml-[49px] text-[28.800px] leading-[113px]">example.png</Line>
            <Line w={72} className="ml-[16px] text-[25.200px] leading-[116px] text-[#86878f]">0.5MB</Line>
            <svg viewBox="0 0 24 24" className="mt-[44px] mr-[40px] ml-auto h-[24px] w-[24px]" fill="none" stroke="#31333f" strokeWidth="3"><path d="M1.500 1.500l21 21M22.500 1.500l-21 21" /></svg>
          </div>
        </div>
        <div className="ml-[32px] flex flex-col gap-[32px] text-[28.800px] leading-[67px] font-medium text-white">
          <button className="flex h-[70px] w-[140px] rounded-[8px] bg-[#ee5a54] pl-[26px]"><Line w={88}>Excute</Line></button>
          <button className="flex h-[70px] w-[126px] rounded-[8px] bg-[#ee5a54] pl-[26px]"><Line w={74}>Reset</Line></button>
        </div>
      </div>
      <ArxivPage />
      <p className="mt-[25px] flex h-[56px] items-baseline leading-[56px] whitespace-pre"><Mono text="Created by 김형석B-T4063@boostcamp AI Tech 4th" /></p>
    </main>
  );
}
